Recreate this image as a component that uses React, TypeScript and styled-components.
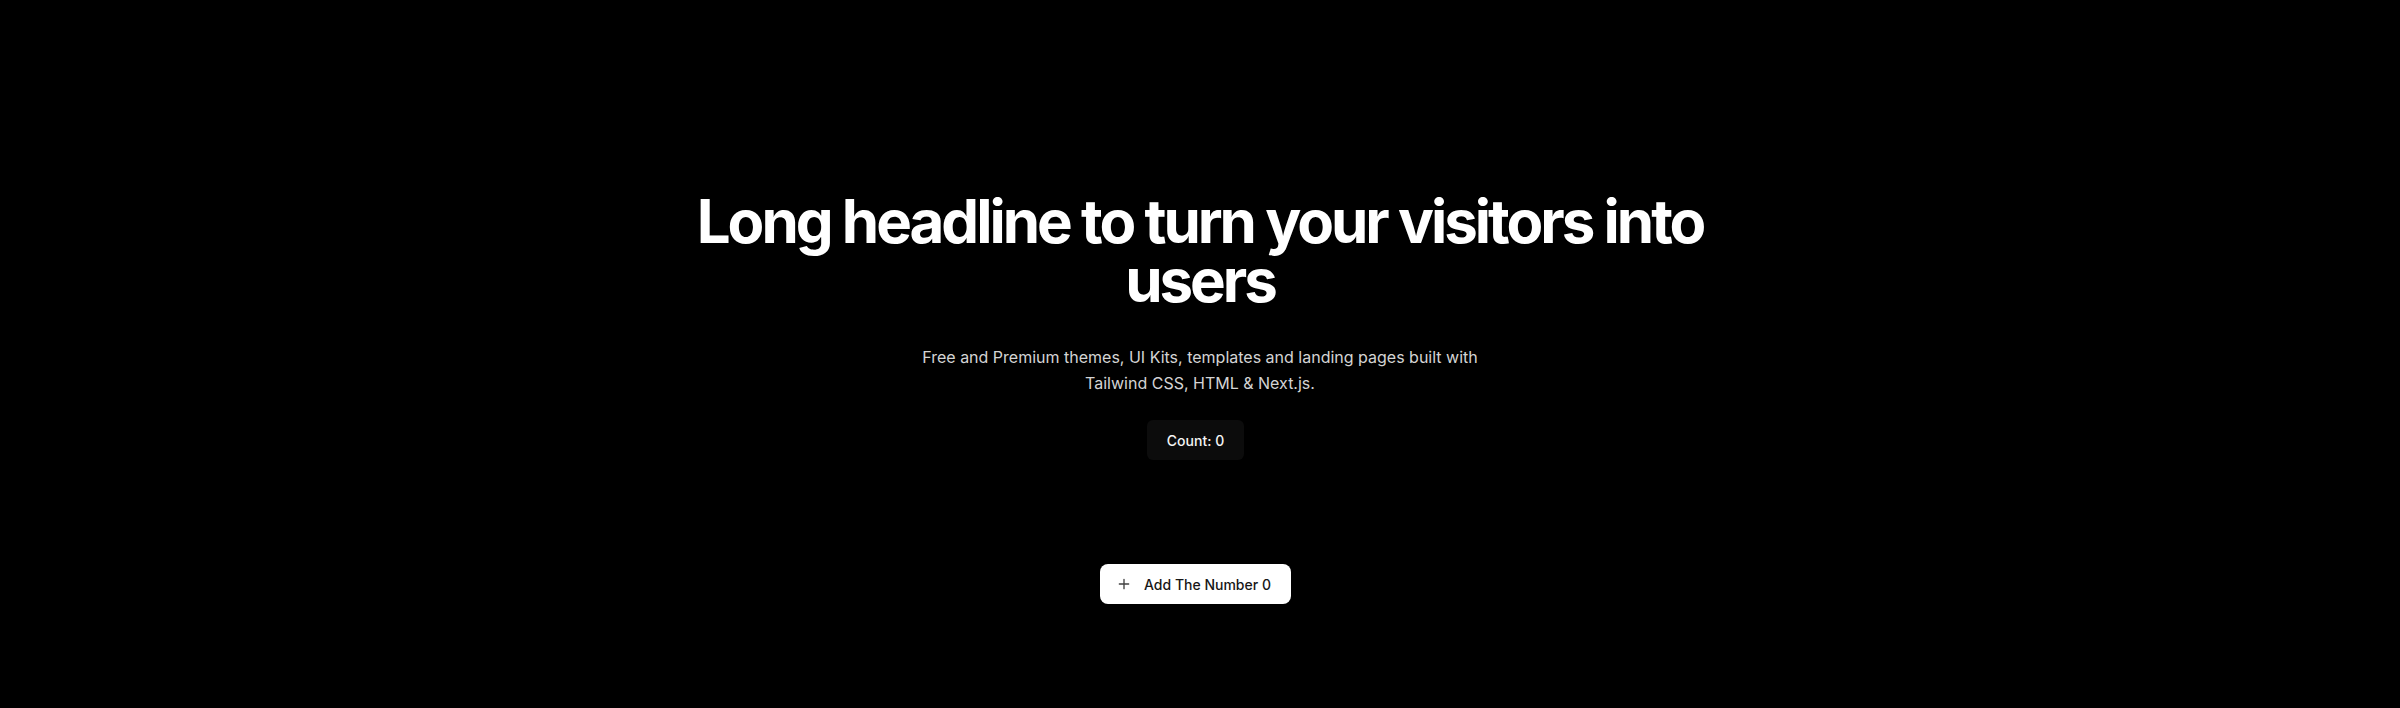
import React, { useState } from "react";
import styled, { createGlobalStyle } from "styled-components";

const GlobalStyle = createGlobalStyle`
  html, body { margin: 0; padding: 0; background: #000; }
  body { font-family: Inter, "Noto Sans", sans-serif; -webkit-font-smoothing: antialiased; }
  * { box-sizing: border-box; }
`;

const Page = styled.main`
  min-height: 708px;
  background: #000;
  display: flex;
  flex-direction: column;
  align-items: center;
  padding-top: 192px;
`;

const Hero = styled.section`
  display: flex;
  flex-direction: column;
  align-items: center;
  text-align: center;
`;

const Headline = styled.h1`
  margin: 0;
  max-width: 1040px;
  font-size: 60px;
  line-height: 59px;
  font-weight: 700;
  letter-spacing: -0.05em;
  color: #fff;
`;

const Lead = styled.p`
  margin: 34px 0 0;
  max-width: 580px;
  font-size: 16px;
  line-height: 26px;
  color: #d4d4d4;
`;

const CountBox = styled.div`
  margin: 24px 9px 0 0;
  padding: 0 20px;
  height: 40px;
  display: flex;
  align-items: center;
  border-radius: 6px;
  background: #0c0c0c;
  color: #f5f5f5;
  font-size: 14px;
  font-weight: 500;
`;

const AddButton = styled.button`
  margin: 104px 9px 0 0;
  height: 40px;
  padding: 0 20px 0 16px;
  display: inline-flex;
  align-items: center;
  gap: 12px;
  border: none;
  border-radius: 8px;
  background: #fff;
  color: #171717;
  font-family: inherit;
  font-size: 14px;
  font-weight: 500;
  cursor: pointer;
`;

const PlusIcon = () => (
  <svg width="16" height="16" viewBox="0 0 24 24" fill="none" stroke="#404040" strokeWidth="2" strokeLinecap="round">
    <path d="M12 5v14M5 12h14" />
  </svg>
);

export default function App() {
  const [count, setCount] = useState(0);
  return (
    <>
      <GlobalStyle />
      <Page>
        <Hero>
          <Headline>Long headline to turn your visitors into users</Headline>
          <Lead>
            Free and Premium themes, UI Kits, templates and landing pages built with Tailwind CSS, HTML &amp; Next.js.
          </Lead>
          <CountBox>Count: {count}</CountBox>
        </Hero>
        <AddButton onClick={() => setCount(count + 1)}>
          <PlusIcon />
          Add The Number {count}
        </AddButton>
      </Page>
    </>
  );
}
